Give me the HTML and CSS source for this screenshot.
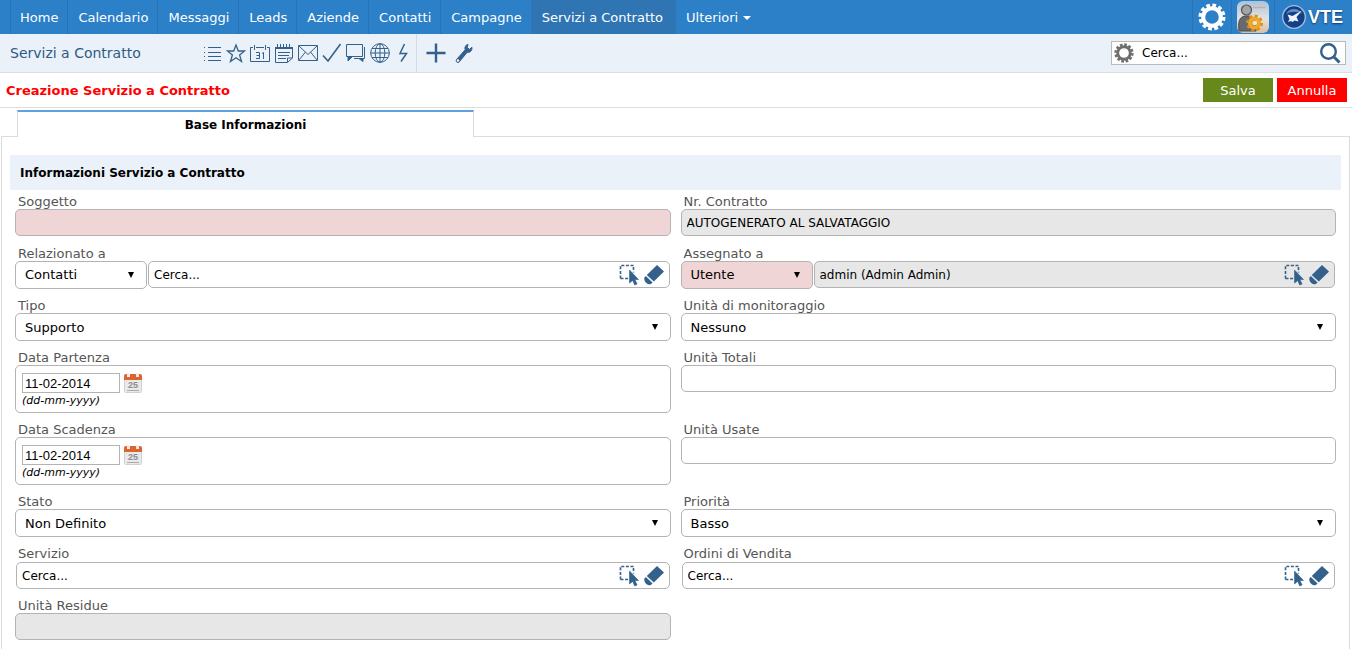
FILE: index.html
```html
<!DOCTYPE html>
<html lang="it">
<head>
<meta charset="utf-8">
<title>Servizi a Contratto</title>
<link rel="stylesheet" href="styles.css">
</head>
<body>
<svg class="defs" aria-hidden="true">
  <symbol id="gear" viewBox="0 0 28 28">
    <circle cx="14" cy="14" r="8.800" fill="none" stroke="currentColor" stroke-width="4"/>
    <circle cx="14" cy="14" r="11.800" fill="none" stroke="currentColor" stroke-width="3.400" stroke-dasharray="3.700 2.480"/>
  </symbol>
  <symbol id="pick" viewBox="0 0 20 22">
    <path d="M1.500 14.500V1.500h13v7M1.500 14.500h8" fill="none" stroke="#34608c" stroke-width="1.600" stroke-dasharray="3 1.600"/>
    <path d="M10.500 6l9 9.500h-3.600l2.200 4.500-2.400 1-2-4.600-3.200 2.600z" fill="#34608c" stroke="#34608c" stroke-width=".6"/>
  </symbol>
  <symbol id="erase" viewBox="0 0 20 20">
    <path d="M13 0l7 6.500L9.800 16.500l-7-6.600z" fill="#34608c"/>
    <path d="M1.800 11l6.800 6.400-1.700 1.500c-1.500.6-3 .4-4.500-.9S0 15 .3 12.700z" fill="#34608c"/>
  </symbol>
  <symbol id="day" viewBox="0 0 18 20">
    <rect x=".5" y="3" width="17" height="16.500" rx="1" fill="#e9e9e9" stroke="#d2d2d2"/>
    <path d="M0 7V3q0-2 2-2h14q2 0 2 2v4z" fill="#dd6430"/>
    <path d="M4.500 0v4M13.500 0v4" stroke="#f7ece6" stroke-width="3"/>
    <path d="M3 17.500h12" stroke="#aaa"/>
  </symbol>
</svg>

<header class="topbar">
  <nav class="menu">
    <a href="#">Home</a><a href="#">Calendario</a><a href="#">Messaggi</a><a href="#">Leads</a><a href="#">Aziende</a><a href="#">Contatti</a><a href="#">Campagne</a><a href="#" class="active">Servizi a Contratto</a><a href="#" class="more">Ulteriori<span class="caret"></span></a>
  </nav>
  <div class="account">
    <button class="acct" aria-label="Impostazioni"><svg width="28" height="28"><use href="#gear"/></svg></button>
    <button class="acct" aria-label="Utente">
      <svg width="32" height="32" viewBox="0 0 32 32">
        <defs><linearGradient id="av" x2="0" y2="1"><stop stop-color="#a9c4da"/><stop offset=".55" stop-color="#e3e2df"/><stop offset="1" stop-color="#dcbf9c"/></linearGradient></defs>
        <rect width="32" height="32" rx="6" fill="url(#av)"/>
        <path d="M16 6.500h12" stroke="#d59a8a" stroke-width="1.600" stroke-dasharray="1.500 .6"/>
        <path d="M2 30c-1-9 0-14 6-15h4c6 1 7 5 7 15z" fill="#66696e" stroke="#4b4e53"/>
        <circle cx="9.500" cy="9" r="5" fill="#a3a4a5" stroke="#505359" stroke-width="1.200"/>
        <circle cx="17.500" cy="22" r="4.600" fill="none" stroke="#f0a826" stroke-width="4"/>
        <circle cx="17.500" cy="22" r="7.300" fill="none" stroke="#dc8d1c" stroke-width="2.400" stroke-dasharray="3 2.730"/>
        <circle cx="17.500" cy="22" r="2.300" fill="#fbe7b5"/>
      </svg>
    </button>
    <a class="brand" href="#">
      <svg width="24" height="24" viewBox="0 0 24 24">
        <circle cx="12" cy="12" r="11.300" fill="#14408a" stroke="#a7bfd8" stroke-width="1.300"/>
        <path d="M4 9a9 9 0 0 1 16 0c-5-3-11-3-16 0z" fill="#5f8fc9"/>
        <path d="M20 5.500l-5.500 6.500 2 4.500-4-1-2 1.500-1.500-1-3 1 1.500-3-2-4.500 5 1.500z" fill="#eef4fa"/>
      </svg>
      <span>VTE</span>
    </a>
  </div>
</header>

<div class="toolbar">
  <h1 class="module">Servizi a Contratto</h1>
  <div class="tools">
    <button aria-label="Elenco"><svg viewBox="0 0 24 24"><path d="M8 6.500h13M8 11.500h13M8 15.500h13M8 19.500h13" /><path d="M4 6.500h1M4 11.500h1M4 15.500h1M4 19.500h1"/></svg></button>
    <button aria-label="Preferiti"><svg viewBox="0 0 24 24"><path d="M12 4l2.300 6H20.500l-4.900 4 1.900 6.500-5.500-3.800-5.500 3.800 1.900-6.500-4.900-4h6.200z" stroke-width="1.300"/></svg></button>
    <button aria-label="Calendario"><svg viewBox="0 0 24 24"><path d="M5 6.500H2.500v14h19v-14H19M8 6.500h8M6.500 4v5M17.500 4v5M8 11.500h3.500v6H8M8.500 14.500h3M14 12.500l1.500-1v6.500"/></svg></button>
    <button aria-label="Note"><svg viewBox="0 0 24 24"><path d="M3.500 6v15.500h12l5-4.500V6M3 7.500h18M5.500 3v4M8.500 3v4M11.500 3v4M14.500 3v4M17.500 3v4M6 11.500h12M6 14.500h11M6 17.500h8M15.500 21v-4h5"/><path d="M3 6.500h18"/></svg></button>
    <button aria-label="Posta"><svg viewBox="0 0 24 24"><path d="M2.500 4.500h19v15h-19zM3 5l9 8.500L21 5M3 19l6.500-8M21 19l-6.500-8"/></svg></button>
    <button aria-label="Attività"><svg viewBox="0 0 24 24"><path d="M3 14.500l5 5.500L20.500 3" stroke-width="1.600"/></svg></button>
    <button aria-label="Messaggi"><svg viewBox="0 0 24 24"><path d="M2.500 3.500h16v12h-16zM20.500 6v11.500H10"/><path d="M4 16v4l4-4zM15 17.500l4 3v-3z" fill="#34608c"/></svg></button>
    <button aria-label="Web"><svg viewBox="0 0 24 24"><circle cx="12" cy="12" r="9.300"/><ellipse cx="12" cy="12" rx="4.800" ry="9.300"/><path d="M12 2.500v19M2.500 12h19M4 7.500h16M4 16.500h16"/></svg></button>
    <button aria-label="Rapido"><svg viewBox="0 0 24 24"><path d="M12.500 3L8 12.500h6.500L9 20.500" stroke-width="1.500"/></svg></button>
  </div>
  <div class="tools extra">
    <button aria-label="Crea"><svg viewBox="0 0 24 24"><path d="M12 2.500v19M2.500 12h19" stroke-width="2.400"/></svg></button>
    <button aria-label="Personalizza"><svg viewBox="0 0 24 24"><path d="M16 3.200c-2.700 1-3.600 3.200-2.800 5.600L4.600 18.400c-1.300 1.500.5 4 2.400 2.800L15.200 11.300c2.800.6 5-1.600 4.800-5l-2.500 2-2.300-1.600z" fill="#34608c"/><circle cx="6" cy="19.500" r="1.200" fill="#fff" stroke="none"/></svg></button>
  </div>
  <div class="search">
    <svg class="search-gear" width="20" height="20"><use href="#gear"/></svg>
    <input type="text" value="Cerca..." aria-label="Cerca">
    <button aria-label="Avvia ricerca"><svg width="22" height="22" viewBox="0 0 22 22" fill="none" stroke="#34608c"><circle cx="9.500" cy="9.500" r="7.300" stroke-width="2.400"/><path d="M14.500 14.500l6 6" stroke-width="3"/></svg></button>
  </div>
</div>

<div class="titlebar">
  <h2>Creazione Servizio a Contratto</h2>
  <button class="btn save" type="submit" form="contract">Salva</button>
  <button class="btn cancel" type="button">Annulla</button>
</div>

<main class="sheet">
  <div class="tabs"><a class="tab" href="#contract">Base Informazioni</a></div>
  <form class="panel" id="contract">
    <h3 class="section">Informazioni Servizio a Contratto</h3>
    <div class="grid">
      <div class="cell">
        <label for="subject">Soggetto</label>
        <input class="box required" id="subject" type="text">
      </div>
      <div class="cell">
        <label for="number">Nr. Contratto</label>
        <input class="box readonly" id="number" type="text" value="AUTOGENERATO AL SALVATAGGIO" readonly>
      </div>

      <div class="cell">
        <label for="related">Relazionato a</label>
        <div class="pair">
          <div class="select"><select class="box" id="related"><option>Contatti</option></select></div>
          <div class="lookup"><input type="text" value="Cerca..." aria-label="Relazionato a"><button type="button" aria-label="Seleziona"><svg width="20" height="22"><use href="#pick"/></svg></button><button type="button" aria-label="Pulisci"><svg width="20" height="20"><use href="#erase"/></svg></button></div>
        </div>
      </div>
      <div class="cell">
        <label for="assigned">Assegnato a</label>
        <div class="pair">
          <div class="select"><select class="box required" id="assigned"><option>Utente</option></select></div>
          <div class="lookup readonly"><input type="text" value="admin (Admin Admin)" aria-label="Assegnato a" readonly><button type="button" aria-label="Seleziona"><svg width="20" height="22"><use href="#pick"/></svg></button><button type="button" aria-label="Pulisci"><svg width="20" height="20"><use href="#erase"/></svg></button></div>
        </div>
      </div>

      <div class="cell">
        <label for="type">Tipo</label>
        <div class="select"><select class="box" id="type"><option>Supporto</option></select></div>
      </div>
      <div class="cell">
        <label for="unit">Unità di monitoraggio</label>
        <div class="select"><select class="box" id="unit"><option>Nessuno</option></select></div>
      </div>

      <div class="cell">
        <label for="start">Data Partenza</label>
        <div class="date box">
          <div class="date-row"><input id="start" type="text" value="11-02-2014"><button type="button" aria-label="Calendario"><svg width="18" height="20"><use href="#day"/><text x="9" y="15" text-anchor="middle" class="day-num">25</text></svg></button></div>
          <em>(dd-mm-yyyy)</em>
        </div>
      </div>
      <div class="cell">
        <label for="total">Unità Totali</label>
        <input class="box" id="total" type="text">
      </div>

      <div class="cell">
        <label for="due">Data Scadenza</label>
        <div class="date box">
          <div class="date-row"><input id="due" type="text" value="11-02-2014"><button type="button" aria-label="Calendario"><svg width="18" height="20"><use href="#day"/><text x="9" y="15" text-anchor="middle" class="day-num">25</text></svg></button></div>
          <em>(dd-mm-yyyy)</em>
        </div>
      </div>
      <div class="cell">
        <label for="used">Unità Usate</label>
        <input class="box" id="used" type="text">
      </div>

      <div class="cell">
        <label for="status">Stato</label>
        <div class="select"><select class="box" id="status"><option>Non Definito</option></select></div>
      </div>
      <div class="cell">
        <label for="priority">Priorità</label>
        <div class="select"><select class="box" id="priority"><option>Basso</option></select></div>
      </div>

      <div class="cell">
        <label for="service">Servizio</label>
        <div class="lookup"><input id="service" type="text" value="Cerca..."><button type="button" aria-label="Seleziona"><svg width="20" height="22"><use href="#pick"/></svg></button><button type="button" aria-label="Pulisci"><svg width="20" height="20"><use href="#erase"/></svg></button></div>
      </div>
      <div class="cell">
        <label for="orders">Ordini di Vendita</label>
        <div class="lookup"><input id="orders" type="text" value="Cerca..."><button type="button" aria-label="Seleziona"><svg width="20" height="22"><use href="#pick"/></svg></button><button type="button" aria-label="Pulisci"><svg width="20" height="20"><use href="#erase"/></svg></button></div>
      </div>

      <div class="cell">
        <label for="left">Unità Residue</label>
        <input class="box readonly" id="left" type="text" readonly>
      </div>
    </div>
  </form>
</main>
</body>
</html>
```

FILE: styles.css
```css
* { box-sizing: border-box; }
body {
  margin: 0;
  background: #fff;
  color: #000;
  font: 13px/16px Verdana, "DejaVu Sans", sans-serif;
}
h1, h2, h3 { margin: 0; font-size: 13px; }
a { color: inherit; text-decoration: none; }
button, input, select { font: inherit; color: inherit; }
button { display: flex; align-items: center; justify-content: center; padding: 0; border: 0; background: none; }
svg { display: block; flex: none; }
.defs { position: absolute; width: 0; height: 0; }

/* Top navigation */
.topbar {
  display: flex;
  justify-content: space-between;
  height: 34px;
  padding-left: 10px;
  background: #2c80c8;
  color: #fff;
}
.menu { display: flex; }
.menu a {
  display: flex;
  align-items: center;
  padding: 2px 9px 0 9px;
  border-left: 1px solid #2873b5;
  white-space: nowrap;
}
.menu a:not(:first-child) { padding-left: 10px; }
.menu .active { padding-right: 13px; background: #2f75b3; border-color: #2f75b3; }
.menu .more { border: 0; }
.caret {
  margin-left: 5px;
  border: 4px solid transparent;
  border-top-color: #fff;
  border-bottom: 0;
}
.account { display: flex; }
.acct { padding: 0 5px; border-left: 1px solid #2873b5; color: #fff; }
.brand {
  display: flex;
  align-items: center;
  gap: 2px;
  padding: 0 9px 0 7px;
  border-left: 1px solid #2873b5;
  font: bold 18px/32px "Liberation Sans", sans-serif;
  text-shadow: 0 1px 2px #0d3a70;
}

/* Module toolbar */
.toolbar {
  display: flex;
  align-items: center;
  height: 39px;
  padding-right: 6px;
  background: #eaf1f8;
  border-bottom: 1px solid #dedede;
  color: #2e5b84;
}
.module { width: 200px; padding-left: 10px; font-size: 14px; font-weight: normal; white-space: nowrap; }
.tools { display: flex; align-items: center; align-self: stretch; }
.tools svg { width: 24px; height: 24px; fill: none; stroke: #34608c; }
.extra { gap: 4px; padding-left: 7px; border-left: 1px solid #cfdde9; }
.search {
  display: flex;
  align-items: center;
  width: 235px;
  height: 24px;
  margin-left: auto;
  padding: 0 4px 0 2px;
  background: #fff;
  border: 1px solid #bababa;
}
.search-gear { color: #6e6e6e; }
.search input { flex: 1; min-width: 0; padding: 0 8px; border: 0; background: none; color: #000; font-size: 12px; }

/* Record title and actions */
.titlebar {
  display: flex;
  align-items: center;
  gap: 4px;
  height: 35px;
  padding: 0 5px 0 6px;
  border-bottom: 1px solid #dedede;
}
.titlebar h2 { margin-right: auto; padding-top: 2px; color: #f00; }
.btn { width: 70px; height: 24px; padding-top: 1px; color: #fff; }
.save { background: #68881b; }
.cancel { background: #f00; }

/* Tab and panel */
.sheet { padding: 2px 2px 0 1px; }
.tabs {
  display: grid;
  grid-template-columns: 16px 457px 1fr;
  height: 27px;
}
.tabs::before, .tabs::after { content: ""; border-bottom: 1px solid #dcdcdc; }
.tab {
  display: flex;
  align-items: center;
  justify-content: center;
  border: solid #dcdcdc;
  border-width: 0 1px;
  border-top: 2px solid #62a1e0;
  font-size: 12px;
  font-weight: bold;
}
.panel { padding: 18px 8px 8px; border: solid #dcdcdc; border-width: 0 1px; }
.section {
  padding: 11px 10px 9px;
  background: #eaf1f8;
  font-size: 12px;
  line-height: 15px;
}

/* Form fields */
.grid {
  display: grid;
  grid-template-columns: 1fr 1fr;
  gap: 8px 10px;
  padding: 3px 5px;
}
.cell { min-height: 44px; }
.cell label { display: block; padding: 2px 3px 0; line-height: 14px; color: #555; }
.box {
  display: block;
  width: 100%;
  height: 27px;
  padding: 0 5px;
  background: #fff;
  border: 1px solid #b3b3b3;
  border-radius: 5px;
}
input.box, .lookup input { font-size: 12px; }
.box.required { background: #f0d5d6; }
.box.readonly, .lookup.readonly { background: #e7e7e7; }
.select { position: relative; }
.select .box { height: 28px; padding: 2px 9px 0; appearance: none; }
.select::after {
  content: "";
  position: absolute;
  top: 11px;
  right: 13px;
  border: solid transparent;
  border-width: 6px 3px 0;
  border-top-color: #000;
  pointer-events: none;
}
.pair { display: grid; grid-template-columns: 132px 1fr; }
.pair .select .box { padding-top: 0; }
.lookup {
  display: flex;
  align-items: center;
  gap: 5px;
  height: 27px;
  margin: 1px 1px 0;
  padding: 0 5px;
  background: #fff;
  border: 1px solid #b3b3b3;
  border-radius: 5px;
}
.pair .lookup { margin-top: 0; }
.lookup input { flex: 1; min-width: 0; padding: 0; border: 0; background: none; }
.date.box { height: 48px; padding: 7px 6px 0; }
.date-row { display: flex; align-items: center; gap: 4px; height: 20px; }
.date input {
  width: 98px;
  height: 20px;
  padding: 0 2px;
  border: 1px solid #b3b3b3;
  font: 13px "Liberation Sans", Arial, sans-serif;
}
.date em { display: block; font-size: 11px; }
.day-num { font: bold 9px "Liberation Sans", sans-serif; fill: #8c8c8c; }
```
